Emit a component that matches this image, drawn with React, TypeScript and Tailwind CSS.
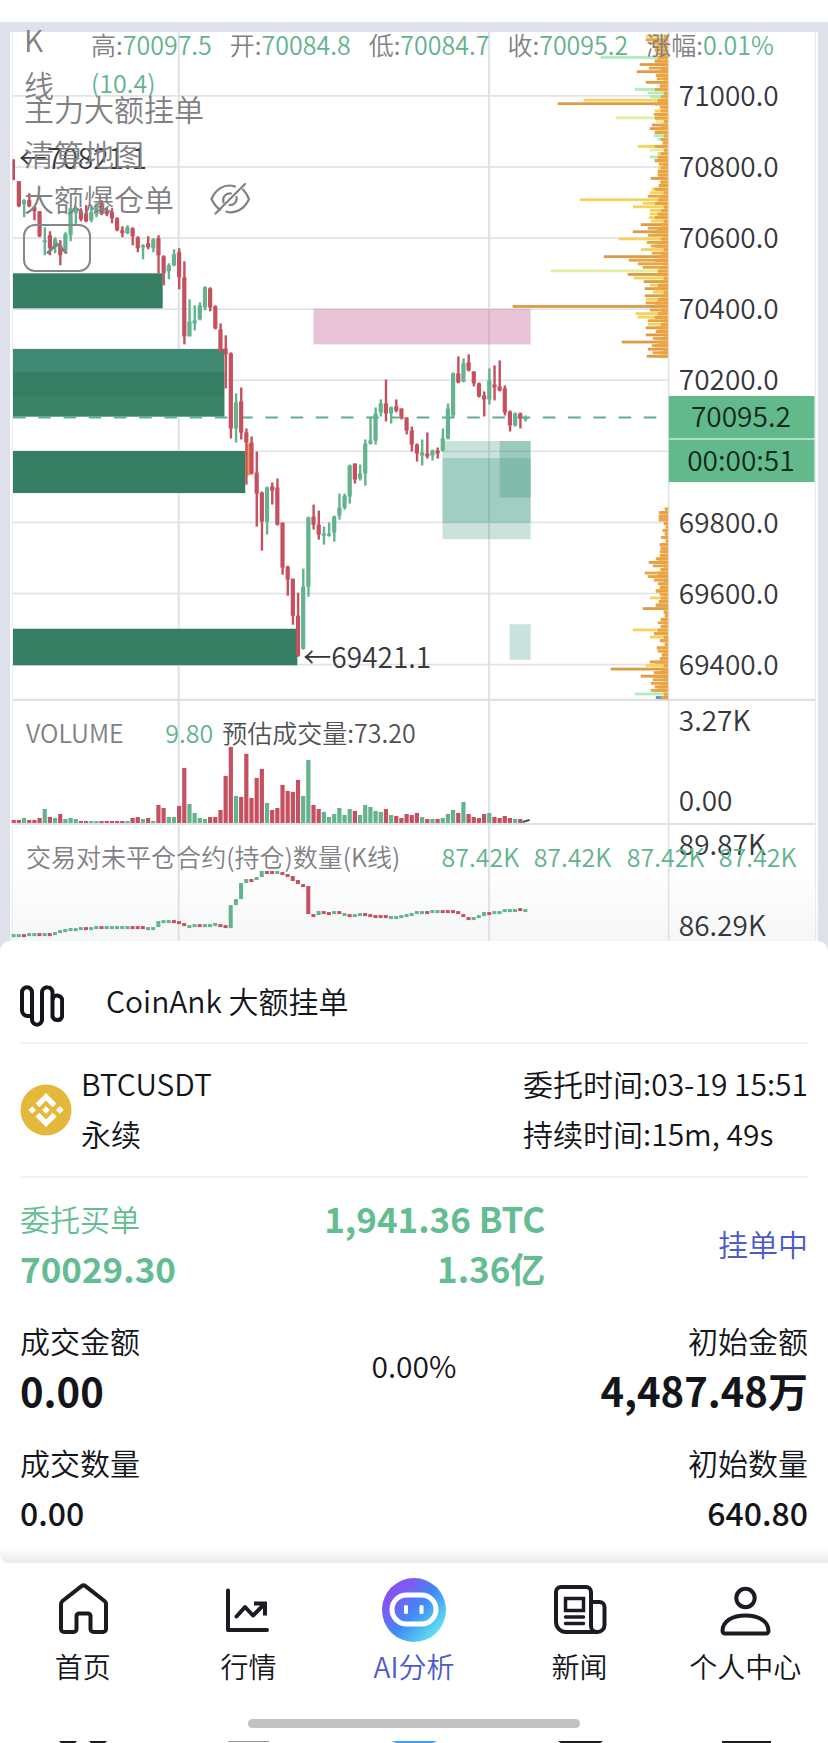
import React from 'react';

const UP = '#62b38e';
const DOWN = '#c5505f';

// x position of the first candle and the distance between candles
const X0 = 13.6;
const STEP = 5.163;

type Candle = [string, number, number, number, number];

// direction, high, body top, body bottom, low
const candles: Candle[] = [
  ['r', 159, 160, 179, 180], ['r', 181, 181, 206, 207], ['g', 199, 200, 204, 217], ['r', 193, 200, 206, 207],
  ['r', 206, 207, 211, 220], ['r', 211, 211, 236, 237], ['g', 227, 240, 242, 255], ['r', 231, 235, 248, 255],
  ['g', 237, 239, 247, 253], ['r', 240, 245, 255, 265], ['g', 232, 234, 250, 253], ['g', 207, 208, 235, 241],
  ['g', 206, 208, 213, 225], ['r', 208, 211, 219, 221], ['r', 205, 213, 221, 222], ['g', 207, 212, 220, 222],
  ['g', 203, 206, 214, 217], ['r', 200, 203, 213, 215], ['r', 207, 210, 214, 216], ['r', 208, 212, 218, 223],
  ['r', 217, 218, 230, 231], ['r', 226, 230, 233, 237], ['g', 225, 227, 233, 234], ['r', 227, 228, 236, 245],
  ['r', 236, 237, 248, 252], ['g', 244, 245, 247, 259], ['r', 236, 243, 247, 249], ['g', 238, 239, 248, 252],
  ['r', 235, 238, 255, 273], ['r', 255, 256, 273, 285], ['g', 263, 265, 271, 279], ['g', 249, 254, 265, 266],
  ['r', 248, 252, 277, 289], ['r', 261, 277, 336, 344], ['g', 299, 321, 336, 336], ['g', 305, 320, 323, 330],
  ['g', 302, 305, 319, 320], ['g', 286, 287, 307, 310], ['r', 287, 288, 307, 311], ['r', 305, 306, 328, 329],
  ['r', 323, 329, 351, 352], ['r', 335, 348, 354, 388], ['r', 352, 353, 428, 438], ['g', 393, 402, 428, 442],
  ['r', 387, 401, 432, 439], ['r', 428, 432, 442, 484], ['r', 436, 442, 473, 474], ['r', 451, 472, 493, 526],
  ['r', 491, 492, 521, 550], ['g', 486, 487, 521, 534], ['r', 482, 486, 490, 504], ['r', 478, 487, 524, 525],
  ['r', 522, 522, 567, 574], ['r', 565, 566, 579, 595], ['r', 578, 578, 615, 624], ['r', 592, 615, 655, 656],
  ['g', 568, 586, 648, 649], ['g', 516, 517, 586, 596], ['r', 504, 516, 524, 529], ['r', 510, 524, 534, 539],
  ['g', 526, 533, 535, 544], ['g', 522, 533, 535, 536], ['g', 515, 516, 532, 541], ['g', 493, 507, 515, 519],
  ['g', 493, 495, 507, 509], ['g', 464, 465, 496, 503], ['r', 463, 463, 479, 483], ['g', 464, 473, 478, 480],
  ['g', 439, 443, 473, 485], ['g', 416, 440, 443, 444], ['g', 407, 413, 440, 444], ['g', 399, 403, 412, 416],
  ['r', 379, 403, 413, 421], ['g', 406, 407, 413, 423], ['r', 399, 406, 410, 412], ['r', 408, 408, 416, 419],
  ['r', 417, 417, 430, 434], ['r', 426, 430, 444, 451], ['r', 443, 444, 453, 461], ['g', 439, 452, 455, 465],
  ['r', 432, 453, 456, 458], ['g', 449, 450, 455, 460], ['r', 447, 450, 453, 458], ['g', 428, 438, 450, 451],
  ['g', 403, 408, 438, 439], ['g', 372, 373, 415, 417], ['r', 356, 373, 382, 383], ['g', 358, 363, 381, 382],
  ['r', 354, 362, 370, 371], ['r', 371, 371, 383, 386], ['r', 382, 383, 396, 397], ['r', 391, 395, 399, 416],
  ['g', 368, 380, 399, 404], ['r', 365, 384, 387, 400], ['r', 360, 386, 390, 391], ['r', 385, 388, 412, 415],
  ['r', 410, 411, 425, 431], ['g', 412, 413, 425, 426], ['r', 412, 413, 418, 428], ['g', 415, 417, 419, 421],
];

const volumes = [
  3, 3, 5, 3, 3, 5, 14, 6, 5, 9, 4, 5, 4, 2, 2, 2, 2, 2, 2, 2, 2, 2, 2, 5, 6, 4, 5, 2, 18, 15, 6, 6, 17, 55, 19,
  10, 5, 4, 6, 6, 13, 47, 76, 27, 26, 69, 25, 45, 54, 20, 13, 15, 38, 32, 31, 43, 27, 63, 18, 14, 11, 6, 9, 15, 8,
  14, 12, 8, 18, 16, 12, 11, 14, 8, 7, 5, 9, 8, 10, 6, 4, 4, 4, 5, 9, 13, 10, 21, 9, 6, 5, 9, 10, 6, 5, 7, 5, 4, 4,
];

// open interest: direction, top, height
const interest: [string, number, number][] = [
  ['g', 933, 3], ['g', 933, 3], ['r', 933, 3], ['g', 932, 3], ['g', 932, 3], ['r', 932, 3], ['g', 932, 3],
  ['r', 932, 3], ['g', 931, 3], ['g', 929, 3], ['g', 928, 3], ['g', 927, 3], ['g', 927, 3], ['g', 926, 3],
  ['r', 926, 3], ['g', 926, 3], ['g', 925, 3], ['r', 925, 3], ['g', 925, 3], ['g', 925, 3], ['g', 925, 3],
  ['g', 925, 3], ['g', 925, 3], ['r', 925, 3], ['r', 925, 3], ['r', 925, 3], ['g', 926, 3], ['g', 926, 3],
  ['g', 920, 6], ['g', 919, 3], ['g', 919, 3], ['r', 919, 3], ['r', 920, 3], ['r', 922, 3], ['g', 924, 3],
  ['g', 923, 3], ['r', 923, 3], ['g', 923, 3], ['g', 923, 3], ['g', 922, 3], ['r', 923, 3], ['r', 924, 3],
  ['g', 904, 23], ['g', 898, 6], ['g', 882, 16], ['g', 878, 4], ['r', 878, 3], ['g', 876, 3], ['g', 870, 6],
  ['r', 870, 3], ['r', 870, 3], ['g', 870, 3], ['r', 871, 3], ['r', 873, 3], ['r', 875, 5], ['r', 879, 4],
  ['r', 883, 3], ['r', 885, 28], ['r', 913, 3], ['g', 910, 4], ['r', 910, 3], ['r', 911, 3], ['g', 910, 3],
  ['r', 910, 3], ['g', 912, 3], ['r', 913, 3], ['g', 913, 3], ['g', 912, 3], ['r', 912, 3], ['r', 913, 3],
  ['r', 914, 3], ['r', 914, 3], ['r', 914, 3], ['g', 915, 3], ['g', 915, 3], ['g', 914, 3], ['g', 913, 3],
  ['g', 912, 3], ['g', 910, 3], ['g', 910, 3], ['r', 910, 3], ['g', 909, 3], ['g', 909, 3], ['r', 909, 3],
  ['r', 909, 3], ['r', 909, 3], ['r', 910, 3], ['r', 913, 3], ['r', 916, 3], ['g', 916, 3], ['g', 914, 3],
  ['g', 911, 4], ['r', 911, 3], ['g', 910, 3], ['g', 910, 3], ['g', 908, 3], ['g', 908, 3], ['g', 908, 3],
  ['r', 907, 3], ['g', 908, 3],
];

const heat: Record<string, string> = {
  o: '#e9a340',
  d: '#dd9b45',
  y: '#f3d35c',
  l: '#e0f0a0',
  g: '#b0edb8',
  b: '#5b8fd0',
};

// liquidation map: one entry per price level, colour key and length
const liquidationsTop = 'y22 o22 o18 y14 o13 o12 g67 o13 d28 o19 d31 y12 o11 d22 o8 g33 g20 g18 y84 d110 o8 y13 o14 l52 l12 d16 d18 y13 g14 g10 o5 y30 l18 y10 g18 d13 o9 y10 o10 y10 d17 y8 o9 y16 y18 o20 y88 y25 y35 y18 y18 y19 y17 d27 o20 d35 o20 y49 o21 o17 y27 o16 d64 o39 o30 o25 l117 d40 y34 d24 y18 d23 y15 d23 y22 o22 d155 o18 y32 y30 o20 y20 d22 o12 d22 o15 d46 o16 d20 o15 d21'.split(' ');
const liquidationsBottom = 'o3 o9 o9 o9 o4 o2 o5 o3 o7 o2 o8 o7 o8 o8 o12 d19 o15 y8 o23 o20 o14 o10 o8 o12 o8 y18 o9 o12 d25 o4 o3 o7 o10 o7 y35 o14 y18 o8 o3 y11 o10 o6 o8 d18 y22 d57 o14 d27 o15 o17 o13 o17 g33 b12'.split(' ');

const priceLevels = [
  { y: 95, label: '71000.0' },
  { y: 166, label: '70800.0' },
  { y: 237, label: '70600.0' },
  { y: 308, label: '70400.0' },
  { y: 379, label: '70200.0' },
  { y: 450, label: '' },
  { y: 521, label: '69800.0' },
  { y: 592, label: '69600.0' },
  { y: 663, label: '69400.0' },
];

const Liquidations = ({ rows, top }: { rows: string[]; top: number }) => (
  <g>
    {rows.map((row, i) => {
      const length = Number(row.slice(1));
      const base = Math.min(length, 4 + (i % 4) * 3);
      const y = top + i * 3.553;
      return (
        <g key={i}>
          <rect x={667 - length} y={y} width={length} height="2.8" fill={heat[row[0]]} />
          <rect x={667 - base} y={y} width={base} height="3.2" fill="#e9a340" />
        </g>
      );
    })}
  </g>
);

const KlineChart = () => (
  <svg viewBox="10 32 807 918" className="block w-full" role="img" aria-label="BTCUSDT K线">
    <defs>
      <linearGradient id="chart-fade" x1="0" y1="0" x2="0" y2="1">
        <stop offset="0.3" stopColor="#ffffff" />
        <stop offset="1" stopColor="#f4f5f6" />
      </linearGradient>
    </defs>
    <rect x="10" y="32" width="807" height="918" fill="#ffffff" />
    <rect x="10" y="825" width="807" height="125" fill="url(#chart-fade)" />

    <g fill="#e0e1e5">
      {priceLevels.map((level) => (
        <rect key={level.y} x="13" y={level.y} width="655" height="1.6" />
      ))}
      <rect x="177.5" y="32" width="2" height="918" />
      <rect x="487.5" y="32" width="2" height="918" />
      <rect x="667" y="32" width="1.6" height="918" />
      <rect x="12" y="32" width="1" height="918" opacity="0.6" />
      <rect x="814" y="32" width="1" height="918" opacity="0.7" />
      <rect x="13" y="698" width="801" height="2" fill="#dcdde3" />
      <rect x="13" y="822" width="801" height="2" />
    </g>

    {/* large resting orders */}
    <g fill="#357e64">
      <rect x="13" y="273" width="149.5" height="35" />
      <rect x="13" y="348.5" width="211" height="67.5" fill="#408a73" />
      <rect x="13" y="372" width="211" height="24" />
      <rect x="13" y="396" width="211" height="20" fill="#3a8369" />
      <rect x="13" y="450.5" width="232" height="42" />
      <rect x="13" y="628" width="284" height="36.5" />
    </g>
    <rect x="313" y="308.5" width="217" height="35.5" fill="#c9769f" fillOpacity="0.43" />
    <g fill="#3c967d">
      <rect x="442" y="440.5" width="88" height="81.5" fillOpacity="0.28" />
      <rect x="442" y="457.5" width="88" height="81" fillOpacity="0.28" />
      <rect x="499" y="440.5" width="31" height="56.5" fillOpacity="0.32" />
      <rect x="509" y="623.5" width="21" height="35.5" fillOpacity="0.28" />
    </g>

    <Liquidations rows={liquidationsTop} top={34.7} />
    <Liquidations rows={liquidationsBottom} top={507} />

    <line x1="13" y1="417" x2="662" y2="417" stroke="#5fae8d" strokeWidth="2" strokeDasharray="12.6 12.6" />
    <rect x="246" y="443" width="4" height="32" fill="#f0a04b" />

    {candles.map(([dir, high, top, bottom, low], i) => {
      const x = X0 + i * STEP;
      return (
        <g key={i} fill={dir === 'g' ? UP : DOWN}>
          <rect x={x - 1} y={high} width="2.4" height={low - high} />
          <rect x={i === 0 ? x - 1 : x - 2} y={top} width={i === 0 ? 2 : 4.2} height={bottom - top} />
        </g>
      );
    })}

    {volumes.map((height, i) => (
      <rect key={i} x={X0 + i * STEP - 2} y={822 - height} width="4.2" height={height} fill={candles[i][0] === 'g' ? UP : DOWN} />
    ))}
    <path d="M522 822v-2l7-2v2z" fill="#3c4a48" />

    {interest.map(([dir, top, height], i) => (
      <rect key={i} x={X0 + i * STEP - 2} y={top} width="4" height={height} fill={dir === 'g' ? UP : DOWN} />
    ))}

    <g fontSize="28" fill="#36373c">
      {priceLevels.map((level) => (
        <text key={level.y} x="678" y={level.y + 11}>{level.label}</text>
      ))}
      <text x="303" y="667">←69421.1</text>
      <text x="19" y="169">←70821.1</text>
      <text x="678" y="730">3.27K</text>
      <text x="678" y="810">0.00</text>
      <text x="678" y="854">89.87K</text>
      <text x="678" y="935">86.29K</text>
    </g>

    <rect x="668" y="395.5" width="145.5" height="42.5" fill="#61b98c" />
    <rect x="668" y="439" width="145.5" height="42.5" fill="#61b98c" />
    <g fontSize="28" fill="#12291d" textAnchor="middle">
      <text x="740" y="427">70095.2</text>
      <text x="740" y="470">00:00:51</text>
    </g>

    <g fontSize="25" fill="#7f8185">
      <text x="26" y="742">VOLUME</text>
      <text x="165" y="742" fill={UP}>9.80</text>
      <text x="222" y="742" fill="#505155">预估成交量:73.20</text>
      <text x="26" y="866">交易对未平仓合约(持仓)数量(K线)</text>
      {[441, 533, 626, 718].map((x) => (
        <text key={x} x={x} y="866" fill={UP}>87.42K</text>
      ))}
    </g>
  </svg>
);

const quotes = [
  { label: '高:', value: '70097.5' },
  { label: '开:', value: '70084.8' },
  { label: '低:', value: '70084.7' },
  { label: '收:', value: '70095.2' },
  { label: '涨幅:', value: '0.01%' },
  { label: '', value: '(10.4)' },
];

const ChartLegend = () => (
  <div className="absolute inset-x-0 top-0 text-[#7f8185]">
    <div className="absolute left-6 -top-[5px] w-7 text-[30px] leading-[45px]">K 线</div>
    <div className="absolute left-[91px] top-[3px] right-0 flex flex-wrap gap-x-[18px] text-[25px] leading-[38px]">
      {quotes.map((quote) => (
        <span key={quote.value} className="whitespace-nowrap">
          {quote.label}
          <span className="text-[#62b38e]">{quote.value}</span>
        </span>
      ))}
    </div>
    <div className="absolute left-6 top-16 text-[30px] leading-[45px] whitespace-nowrap">
      <p>主力大额挂单</p>
      <p>清算地图</p>
      <div className="flex items-center gap-9">
        <p>大额爆仓单</p>
        <button type="button" aria-label="隐藏大额爆仓单">
          <svg viewBox="0 0 40 32" className="h-8 w-10" fill="none" stroke="currentColor" strokeWidth="2.2" strokeLinecap="round">
            <path d="M25 3.500C14.500 0 5.500 6.500 1.500 16c2.200 4.800 5 8.400 8.600 10.600" />
            <path d="M33 6.500c2.500 2.500 4.500 5.800 6 9.500-4.500 10.300-13.500 15-22.500 12.700" />
            <path d="M13.500 19.500c-1.600-5 2-9.700 7.500-9" />
            <path d="M26.500 14c.9 4.600-2.500 8.400-7 8" />
            <path d="M5.500 30.500L35 1" />
          </svg>
        </button>
      </div>
      <button
        type="button"
        aria-label="收起"
        className="mt-[3px] -ml-px flex h-12 w-[68px] items-center justify-center rounded-xl border-2 border-[#85878b]"
      >
        <svg viewBox="0 0 22 12" className="h-3 w-[22px]" fill="none" stroke="currentColor" strokeWidth="3" strokeLinecap="round" strokeLinejoin="round">
          <path d="M2 10.500L11 2l9 8.500" />
        </svg>
      </button>
    </div>
  </div>
);

const CoinAnkLogo = () => (
  <svg viewBox="0 0 44 42" className="mt-3 h-[42px] w-11" fill="none" stroke="#14151a" strokeWidth="4" strokeLinejoin="round">
    <path d="M12 31H7.500A5.500 5.500 0 0 1 2 25.500V7.500A5 5 0 0 1 7 2.200a5 5 0 0 1 5 5.300v27a5 5 0 0 0 5 5.200a5 5 0 0 0 5-5.200V7.500a5.300 5.300 0 0 1 5.500-5.300A5 5 0 0 1 32.500 7.500v25" />
    <path d="M32.500 14.500a4.800 4.800 0 0 1 9.600 2V31.500a5 5 0 0 1-9.600 0" />
  </svg>
);

const BinanceLogo = () => (
  <svg viewBox="0 0 52 52" className="h-[52px] w-[52px] shrink-0">
    <circle cx="26" cy="26" r="25.500" fill="#e5b83b" />
    <g fill="#fff">
      <path d="M26 9l10.500 10.500-3.800 3.800L26 16.600l-6.700 6.700-3.800-3.800z" />
      <path d="M26 43L15.500 32.500l3.800-3.800 6.700 6.700 6.700-6.700 3.800 3.800z" />
      <path d="M26 22.200l3.800 3.800-3.800 3.800-3.800-3.800z" />
      <path d="M12.200 22.200L16 26l-3.800 3.800L8.400 26z" />
      <path d="M39.800 22.200l3.800 3.800-3.800 3.800L36 26z" />
    </g>
  </svg>
);

const OrderSheet = () => (
  <section className="relative -mt-[10px] rounded-t-[10px] bg-white px-5 text-[30px] leading-[50px] text-[#14151a]">
    <header className="flex h-[103px] items-center gap-[42px] border-b-2 border-[#f2f3f5] pt-4">
      <CoinAnkLogo />
      <h1>CoinAnk 大额挂单</h1>
    </header>

    <div className="flex h-[134px] items-center justify-between border-b-2 border-[#f2f3f5]">
      <div className="flex items-center gap-[9px]">
        <BinanceLogo />
        <div className="pb-1">
          <p>BTCUSDT</p>
          <p>永续</p>
        </div>
      </div>
      <div className="pb-1">
        <p>委托时间:03-19 15:51</p>
        <p>持续时间:15m, 49s</p>
      </div>
    </div>

    <div className="flex flex-col gap-[22px] pt-[15px] pb-[26px]">
      <div className="grid grid-cols-3 items-center text-[#64bd92]">
        <div>
          <p>委托买单</p>
          <p className="text-[35px] font-bold">70029.30</p>
        </div>
        <div className="text-right text-[35px] font-bold">
          <p>1,941.36 BTC</p>
          <p>1.36亿</p>
        </div>
        <p className="text-right text-[#4c5bc9]">挂单中</p>
      </div>
      <div className="grid grid-cols-3 items-center">
        <div>
          <p>成交金额</p>
          <p className="text-[40px] font-bold">0.00</p>
        </div>
        <p className="text-center">0.00%</p>
        <div className="text-right">
          <p>初始金额</p>
          <p className="text-[40px] font-bold">4,487.48万</p>
        </div>
      </div>
      <div className="flex justify-between">
        <div>
          <p>成交数量</p>
          <p className="text-[32px] font-medium">0.00</p>
        </div>
        <div className="text-right">
          <p>初始数量</p>
          <p className="text-[32px] font-medium">640.80</p>
        </div>
      </div>
    </div>
    <div className="absolute inset-x-0 bottom-0 h-4 rounded-bl-lg bg-linear-to-b from-white to-[#ebebeb]" />
  </section>
);

const HomeIcon = () => (
  <svg viewBox="0 0 64 64" className="h-16 w-16" fill="none" stroke="#1b1c21" strokeWidth="4" strokeLinejoin="round" strokeLinecap="round">
    <path d="M30.500 8.200a3 3 0 0 1 4 0L53.500 23a4 4 0 0 1 1.500 3v25a3 3 0 0 1-3 3h-9.500a3 3 0 0 1-3-3V38a2.500 2.500 0 0 0-2.500-2.500h-9a2.500 2.500 0 0 0-2.500 2.500v13a3 3 0 0 1-3 3H13a3 3 0 0 1-3-3V26a4 4 0 0 1 1.500-3z" />
  </svg>
);

const MarketIcon = () => (
  <svg viewBox="0 0 64 64" className="h-16 w-16" fill="none" stroke="#1b1c21" strokeWidth="4" strokeLinejoin="round" strokeLinecap="round">
    <path d="M12 12.500v39.500h39" />
    <path d="M20.500 38.500l8.500-9.500 8 8.500L48.500 26" />
    <path d="M38 25.500h11v12" strokeLinecap="butt" strokeLinejoin="miter" />
  </svg>
);

const AiIcon = () => (
  <svg viewBox="0 0 64 64" className="h-16 w-16">
    <defs>
      <linearGradient id="ai-fill" x1="0.1" y1="0.15" x2="0.85" y2="0.85">
        <stop offset="0" stopColor="#8a4ff0" />
        <stop offset="0.2" stopColor="#7c5cf2" />
        <stop offset="0.55" stopColor="#3f8af5" />
        <stop offset="1" stopColor="#5fe0f0" />
      </linearGradient>
    </defs>
    <circle cx="32" cy="32" r="32" fill="url(#ai-fill)" />
    <rect x="10" y="17" width="44" height="29" rx="14.500" fill="none" stroke="#fff" strokeWidth="5" />
    <rect x="22" y="27" width="4" height="9" rx="1.500" fill="#fff" />
    <rect x="37.500" y="27" width="4" height="9" rx="1.500" fill="#fff" />
  </svg>
);

const NewsIcon = () => (
  <svg viewBox="0 0 64 64" className="h-16 w-16" fill="none" stroke="#1b1c21" strokeWidth="4" strokeLinejoin="round" strokeLinecap="round">
    <path d="M49 54H18a10 10 0 0 1-10-10V14a5 5 0 0 1 5-5h25a5 5 0 0 1 5 5v34a6 6 0 0 0 6 6a7 7 0 0 0 7.500-7V29a5 5 0 0 0-5-5H44" />
    <path d="M17.500 20.500h18v12h-18zM17.500 39h18M17.500 45.500h18" strokeLinejoin="miter" strokeWidth="3.500" />
  </svg>
);

const UserIcon = () => (
  <svg viewBox="0 0 64 64" className="h-16 w-16" fill="none" stroke="#1b1c21" strokeWidth="4" strokeLinejoin="round">
    <circle cx="32.500" cy="20" r="9.200" />
    <path d="M12 55.500a2.500 2.500 0 0 1-2.500-2.500c0-10 10-15.500 23-15.500S55.500 43 55.500 53a2.500 2.500 0 0 1-2.500 2.500z" />
  </svg>
);

const tabs = [
  { label: '首页', icon: <HomeIcon /> },
  { label: '行情', icon: <MarketIcon /> },
  { label: 'AI分析', icon: <AiIcon />, active: true },
  { label: '新闻', icon: <NewsIcon /> },
  { label: '个人中心', icon: <UserIcon /> },
];

const TabBar = () => (
  <nav className="bg-white">
    <ul className="grid grid-cols-5 pt-[15px]">
      {tabs.map((tab) => (
        <li key={tab.label}>
          <a
            href="#"
            aria-current={tab.active ? 'page' : undefined}
            className={`flex flex-col items-center gap-1 text-[28px] leading-[40px] ${tab.active ? 'text-[#4c5bc9]' : 'text-[#14151a]'}`}
          >
            {tab.icon}
            {tab.label}
          </a>
        </li>
      ))}
    </ul>
    <div className="mx-auto mt-[33px] h-[9px] w-2/5 rounded-full bg-[#c1c1c1]" />
    <svg viewBox="0 0 828 3" className="mt-[13px] block w-full" aria-hidden="true">
      <path d="M59 0h18l-3 3H62zM89 0h18l-3 3H92zM558 0h45l-4 3h-37zM722 0h49v3h-49z" fill="#1b1c21" />
      <path d="M228 0h41v1h-41z" fill="#9a9a9a" />
      <path d="M391 0h46l-6 3h-32z" fill="#4a9cf2" />
    </svg>
  </nav>
);

const App: React.FC = () => {
  return (
    <div className="min-h-screen bg-white pt-[22px] font-['Noto_Sans_CJK_SC',sans-serif] font-[350]">
      <main>
        <section className="bg-[#dfe1ea] px-[10px] pt-[10px]">
          <KlineChart />
        </section>
        <OrderSheet />
      </main>
      <div className="absolute inset-x-0 top-[22px]">
        <ChartLegend />
      </div>
      <TabBar />
    </div>
  );
};

export default App;
